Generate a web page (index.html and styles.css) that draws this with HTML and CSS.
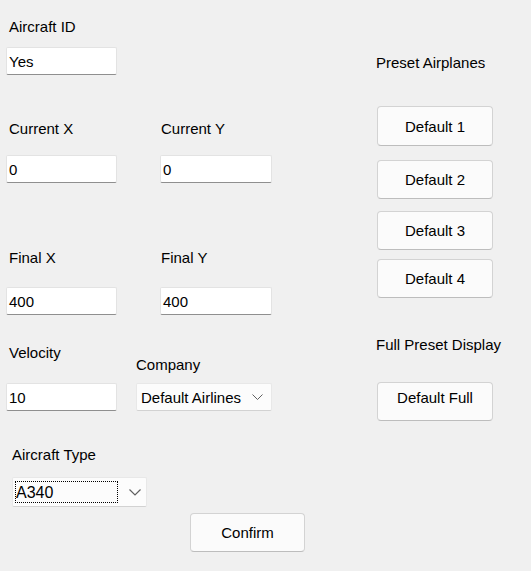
FILE: index.html
```html
<!DOCTYPE html>
<html lang="en">
<head>
<meta charset="utf-8">
<title>Aircraft</title>
<link rel="stylesheet" href="styles.css">
</head>
<body>
<div class="form">
  <div class="left">
    <div class="row r1">
      <div class="field f-a">
        <label class="lbl">Aircraft ID</label>
        <div class="textbox w111">Yes</div>
      </div>
    </div>
    <div class="row r2">
      <div class="field f-a">
        <label class="lbl">Current X</label>
        <div class="textbox w111">0</div>
      </div>
      <div class="field f-b">
        <label class="lbl">Current Y</label>
        <div class="textbox w112">0</div>
      </div>
    </div>
    <div class="row r3">
      <div class="field f-a">
        <label class="lbl">Final X</label>
        <div class="textbox w111">400</div>
      </div>
      <div class="field f-b">
        <label class="lbl">Final Y</label>
        <div class="textbox w112">400</div>
      </div>
    </div>
    <div class="row r4">
      <div class="field f-a vel">
        <label class="lbl">Velocity</label>
        <div class="textbox w111">10</div>
      </div>
      <div class="field f-c comp">
        <label class="lbl">Company</label>
        <div class="combo combo-company">
          <span class="combo-text">Default Airlines</span>
          <svg class="chev" width="11" height="6" viewBox="0 0 11 6"><path d="M0.5 0.5 L5.5 5.5 L10.5 0.5" fill="none" stroke="#606060" stroke-width="1"/></svg>
        </div>
      </div>
    </div>
    <div class="row r5">
      <div class="field f-d">
        <label class="lbl">Aircraft Type</label>
        <div class="combo combo-type">
          <span class="focus-text">A340</span>
          <svg class="chev2" width="12" height="7" viewBox="0 0 12 7"><path d="M0.5 0.5 L6 6 L11.5 0.5" fill="none" stroke="#606060" stroke-width="1.2"/></svg>
        </div>
      </div>
    </div>
    <div class="row r6">
      <button class="btn confirm">Confirm</button>
    </div>
  </div>
  <div class="right">
    <div class="lbl head1">Preset Airplanes</div>
    <div class="presets">
      <button class="btn preset p1">Default 1</button>
      <button class="btn preset p2">Default 2</button>
      <button class="btn preset p3">Default 3</button>
      <button class="btn preset p4">Default 4</button>
    </div>
    <div class="lbl head2">Full Preset Display</div>
    <button class="btn preset full">Default Full</button>
  </div>
</div>
</body>
</html>
```

FILE: styles.css
```css
html, body {
  margin: 0;
  padding: 0;
  background: #f0f0f0;
}
body {
  width: 531px;
  height: 571px;
  overflow: hidden;
  font-family: "Liberation Sans", Arial, sans-serif;
  font-size: 15px;
  line-height: 17px;
  color: #000;
}
.form {
  display: grid;
  grid-template-columns: 376px 155px;
}
.left {
  padding-top: 18px;
  display: flex;
  flex-direction: column;
}
.row {
  display: flex;
  align-items: flex-end;
}
.field {
  display: flex;
  flex-direction: column;
}
.lbl {
  display: block;
  height: 17px;
  white-space: nowrap;
}
.f-a { margin-left: 6px; }
.f-a .lbl { margin-left: 3px; }
.f-b { margin-left: 43px; }
.f-b .lbl { margin-left: 1px; }
.f-c { margin-left: 19px; }
.f-d { margin-left: 12px; }

.r1 .lbl { margin-bottom: 12px; }
.r2 { margin-top: 45px; }
.r2 .lbl { margin-bottom: 18px; }
.r3 { margin-top: 66px; }
.r3 .lbl { margin-bottom: 21px; }
.r4 { margin-top: 29px; }
.vel .lbl { margin-bottom: 22px; }
.comp .lbl { margin-bottom: 10px; }
.r5 { margin-top: 35px; }
.r5 .lbl { margin-bottom: 14px; }
.r6 { margin-top: 6px; padding-left: 190px; }

.textbox {
  box-sizing: border-box;
  height: 28px;
  background: #fff;
  border: 1px solid #e3e3e3;
  border-bottom: 1px solid #8f8f8f;
  border-radius: 2px;
  padding: 0 2px;
  display: flex;
  align-items: center;
}
.w111 { width: 111px; }
.w112 { width: 112px; }

.combo {
  box-sizing: border-box;
  background: #fcfcfc;
  border: 1px solid #e8e8e8;
  border-bottom-color: #d2d2d2;
  border-radius: 2px;
  display: flex;
  align-items: center;
  overflow: hidden;
}
.combo-company {
  width: 136px;
  height: 28px;
  padding-left: 4px;
}
.combo-text {
  width: 103px;
  overflow: hidden;
  white-space: nowrap;
  flex: none;
}
.chev {
  margin-left: 8px;
  flex: none;
}
.combo-type {
  width: 135px;
  height: 30px;
  padding-left: 2px;
  font-size: 16px;
}
.focus-text {
  box-sizing: border-box;
  width: 103px;
  height: 22px;
  outline: 1px dotted #000;
  outline-offset: -1px;
  display: flex;
  align-items: center;
  padding-left: 1px;
  flex: none;
}
.chev2 {
  margin-left: 11px;
  flex: none;
}

.btn {
  box-sizing: border-box;
  font: inherit;
  color: #000;
  background: #fbfbfb;
  border: 1px solid #d3d3d3;
  border-bottom-color: #bdbdbd;
  border-radius: 4px;
  padding: 0;
  margin: 0;
  display: block;
}
.confirm {
  width: 115px;
  height: 39px;
}

.right {
  padding-top: 54px;
  display: flex;
  flex-direction: column;
}
.presets {
  display: flex;
  flex-direction: column;
  margin-top: 35px;
}
.preset {
  width: 116px;
  height: 39px;
  margin-left: 1px;
}
.p1 { height: 40px; }
.p2 { margin-top: 14px; }
.p3 { margin-top: 12px; }
.p4 { margin-top: 9px; }
.head2 { margin-top: 38px; }
.full {
  margin-top: 29px;
  padding-bottom: 9px;
}
```
